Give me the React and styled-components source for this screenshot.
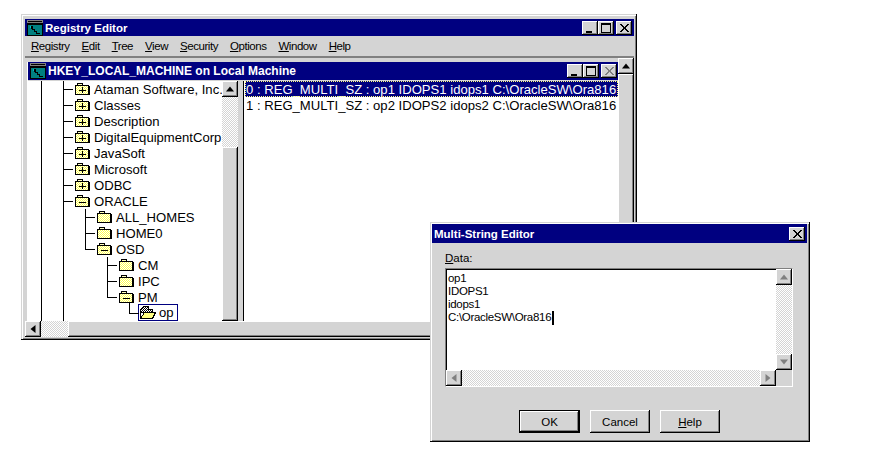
import React from "react";
import styled, { createGlobalStyle, css } from "styled-components";

const FACE = "#d4d4d4";
const SHADOW = "#808080";
const NAVY = "#000080";
const FONT = `"Liberation Sans", Arial, sans-serif`;

const GlobalStyle = createGlobalStyle`
  html, body {
    margin: 0;
    padding: 0;
    background: #fff;
  }
  #root {
    height: 465px;
  }
`;

const raised = css`
  background-color: ${FACE};
  box-shadow: inset -1px -1px 0 #000, inset 1px 1px 0 #fff, inset -2px -2px 0 ${SHADOW};
`;

const checker = css`
  background: repeating-conic-gradient(#fff 0 25%, ${FACE} 0 50%) 0 0 / 2px 2px;
`;

const Desktop = styled.div`
  position: relative;
  width: 875px;
  height: 465px;
  overflow: hidden;
  background: #fff;
  font-family: ${FONT};
  color: #000;
`;

const Window = styled.div`
  position: absolute;
  left: ${(p) => p.$left}px;
  top: ${(p) => p.$top}px;
  width: ${(p) => p.$width}px;
  height: ${(p) => p.$height}px;
  box-sizing: border-box;
  display: flex;
  flex-direction: column;
  padding: ${(p) => p.$padding};
  background: ${FACE};
  box-shadow: inset -1px -1px 0 #000, inset 1px 1px 0 ${FACE}, inset 2px 2px 0 #fff, inset -2px -2px 0 ${SHADOW};
`;

const TitleBar = styled.div`
  flex: none;
  height: ${(p) => p.$height}px;
  display: flex;
  align-items: center;
  padding: 0 ${(p) => p.$right || 2}px 0 ${(p) => p.$left || 2}px;
  background: ${NAVY};
  color: #fff;
`;

const TitleText = styled.span`
  flex: 1;
  margin-left: ${(p) => p.$indent || 0}px;
  font-size: ${(p) => p.$size || 12}px;
  font-weight: 700;
  white-space: nowrap;
`;

const CaptionButton = styled.div`
  ${raised}
  flex: none;
  width: 16px;
  height: 14px;
  display: flex;
  align-items: center;
  justify-content: center;
  margin-left: ${(p) => p.$gap || 0}px;
`;

const CaptionGlyph = styled.svg`
  display: block;
  width: 10px;
  height: 10px;
  color: ${(p) => (p.$disabled ? SHADOW : "#000")};
`;

const MenuBar = styled.div`
  flex: none;
  height: 20px;
  display: flex;
  align-items: center;
  gap: 12px;
  padding-left: 6px;
  font-size: 11.5px;
  letter-spacing: -0.45px;
`;

const MenuItem = styled.span`
  white-space: nowrap;
`;

const Workspace = styled.div`
  flex: 1;
  min-height: 0;
  display: flex;
  border-top: 2px solid ${SHADOW};
`;

const MdiArea = styled.div`
  flex: 1;
  min-width: 0;
  padding: 4px 0 0 2px;
  overflow: hidden;
`;

const ChildWindow = styled.div`
  height: 100%;
  display: flex;
  flex-direction: column;
  border-left: 1px solid #fff;
`;

const SplitPane = styled.div`
  flex: 1;
  min-height: 0;
  display: flex;
  padding-top: 1px;
`;

const TreePane = styled.div`
  flex: none;
  width: 194px;
  padding-left: 13px;
  box-sizing: border-box;
  background: #fff;
  overflow: hidden;
`;

const TreeRow = styled.div`
  height: 16px;
  display: flex;
  align-items: stretch;
  font-size: 13.1px;
  white-space: nowrap;
`;

const Guide = styled.span`
  flex: none;
  position: relative;
  width: ${(p) => (p.$kind === "tee" || p.$kind === "ell" ? 11 : 22)}px;

  &::before {
    content: "";
    display: ${(p) => (p.$kind === "none" ? "none" : "block")};
    position: absolute;
    left: 0;
    top: ${(p) => (p.$kind === "ell" ? "-3px" : "0")};
    bottom: ${(p) => (p.$kind === "ell" ? "7px" : "0")};
    width: 1px;
    background: #000;
  }

  &::after {
    content: "";
    display: ${(p) => (p.$kind === "tee" || p.$kind === "ell" ? "block" : "none")};
    position: absolute;
    left: 0;
    top: 8px;
    width: 10px;
    height: 1px;
    background: #000;
  }
`;

const FolderIcon = styled.svg`
  flex: none;
  display: block;
  width: 16px;
  height: 14px;
  margin-top: 1px;
`;

const TreeLabel = styled.span`
  margin-left: 4px;
  line-height: 17px;
`;

const SelectedNode = styled.span`
  display: flex;
  align-items: center;
  height: 17px;
  margin: -1px 0 0 -2px;
  padding: 0 3px 0 1px;
  border: 1px solid ${NAVY};
  box-sizing: border-box;
`;

const OpenLabel = styled.span`
  margin-left: 3px;
  line-height: 15px;
`;

const ScrollColumn = styled.div`
  flex: none;
  width: 16px;
  display: flex;
  flex-direction: column;
`;

const ScrollRow = styled.div`
  flex: none;
  height: 16px;
  display: flex;
`;

const ScrollButton = styled.div`
  ${raised}
  flex: none;
  width: 16px;
  height: 16px;
  display: flex;
  align-items: center;
  justify-content: center;
`;

const Arrow = styled.svg`
  display: block;
  width: 8px;
  height: 8px;
  color: ${(p) => (p.$disabled ? SHADOW : "#000")};
`;

const Thumb = styled.div`
  ${raised}
  flex: 1;
  min-width: 0;
  min-height: 0;
`;

const Track = styled.div`
  ${checker}
  flex: ${(p) => (p.$size ? "none" : 1)};
  ${(p) => (p.$size ? `${p.$axis === "x" ? "width" : "height"}: ${p.$size}px;` : "")}
`;

const Splitter = styled.div`
  flex: none;
  width: 5px;
  background: ${FACE};
`;

const ValueList = styled.div`
  flex: 1;
  min-width: 0;
  padding-left: 1px;
  border-left: 1px solid #000;
  background: #fff;
  overflow: hidden;
`;

const ValueRow = styled.div`
  height: 16px;
  box-sizing: border-box;
  padding-left: 1px;
  line-height: 17px;
  font-size: 13.1px;
  white-space: nowrap;
  ${(p) =>
    p.$selected &&
    css`
      background: ${NAVY};
      color: #fff;
      outline: 1px dotted #ffff80;
      outline-offset: -1px;
    `}
`;

const DialogBody = styled.div`
  flex: 1;
  display: flex;
  flex-direction: column;
  padding: 9px 0 0 13px;
`;

const FieldLabel = styled.div`
  height: 16px;
  line-height: 13px;
  font-size: 11.5px;
`;

const EditBox = styled.div`
  flex: none;
  width: 348px;
  height: 119px;
  box-sizing: border-box;
  display: grid;
  grid-template-columns: 1fr 16px;
  grid-template-rows: 1fr 16px;
  border: 1px solid;
  border-color: ${SHADOW} #fff #fff ${SHADOW};
  box-shadow: inset 1px 1px 0 #000;
`;

const EditText = styled.div`
  padding: 1.5px 0 0 1px;
  margin: 1px 0 0 1px;
  background: #fff;
  font-size: 11.5px;
  line-height: 13.2px;
  letter-spacing: -0.3px;
`;

const EditLine = styled.div`
  height: 13.2px;
  white-space: nowrap;
`;

const Caret = styled.span`
  display: inline-block;
  width: 2px;
  height: 14px;
  margin-left: 1px;
  background: #000;
  vertical-align: top;
`;

const Corner = styled.div`
  background: ${FACE};
`;

const ButtonRow = styled.div`
  flex: none;
  display: flex;
  gap: 10px;
  margin: 23px 0 0 74px;
`;

const PushButton = styled.div`
  ${raised}
  flex: none;
  width: ${(p) => (p.$default ? 61 : 60)}px;
  height: 23px;
  box-sizing: border-box;
  display: flex;
  align-items: center;
  justify-content: center;
  font-size: 11.5px;
  ${(p) =>
    p.$default &&
    css`
      border: 1px solid #000;
    `}
`;

function AppIcon() {
  return (
    <svg width="16" height="16" viewBox="0 0 16 16" shapeRendering="crispEdges" style={{ display: "block", flex: "none" }}>
      <rect x="0" y="0" width="16" height="3" fill="#808080" />
      <rect x="1" y="1" width="14" height="1" fill="#000" />
      <rect x="0" y="3" width="16" height="13" fill="#000" />
      <rect x="1" y="5" width="14" height="10" fill="#008080" />
      <path d="M4 6h2v3h2v2h2v2h3v1h-4v-2h-2v-2h-2v-1h-1z" fill="#000" />
      <rect x="3" y="6" width="1" height="2" fill="#00c0c0" />
    </svg>
  );
}

function Folder({ mark }) {
  return (
    <FolderIcon viewBox="0 0 16 14" shapeRendering="crispEdges">
      <defs>
        <pattern id="dither" width="2" height="2" patternUnits="userSpaceOnUse">
          <rect width="2" height="2" fill="#fff" />
          <rect width="1" height="1" fill="#ffff50" />
          <rect x="1" y="1" width="1" height="1" fill="#ffff50" />
        </pattern>
      </defs>
      <path d="M3.5 3.5V1.5h5v2" fill="#ffffc0" stroke="#000" />
      <rect x="1.5" y="3.5" width="13" height="9" fill="url(#dither)" stroke="#000" />
      <rect x="15" y="4" width="1" height="9" fill="#000" />
      {mark && <rect x="5" y="7.5" width="7" height="1" fill="#000" />}
      {mark === "plus" && <rect x="8" y="5" width="1" height="6" fill="#000" />}
    </FolderIcon>
  );
}

function OpenFolder() {
  return (
    <FolderIcon viewBox="0 0 16 14" shapeRendering="crispEdges">
      <pattern id="hatch" width="2" height="2" patternUnits="userSpaceOnUse">
        <rect width="2" height="2" fill="#fff" />
        <rect width="1" height="1" fill="#000" />
        <rect x="1" y="1" width="1" height="1" fill="#000" />
      </pattern>
      <path d="M0.5 12.5V3.5L3.5 0.5H8.5V3.5H12.5V6.5H0.5z" fill="url(#hatch)" stroke="#000" />
      <path d="M0.5 12.5L4.5 6.5H15.5L12.5 12.5z" fill="#ffff80" stroke="#000" />
    </FolderIcon>
  );
}

const GLYPHS = {
  min: <rect x="1" y="8" width="6" height="2" fill="currentColor" />,
  max: <path d="M0.5 0.5H9.5V9.5H0.5zM0 1.5H10" fill="none" stroke="currentColor" />,
  close: <path d="M1 1L9 9M2 1L10 9M9 1L1 9M10 1L2 9" fill="none" stroke="currentColor" />,
};

function Caption({ type, disabled, gap }) {
  return (
    <CaptionButton $gap={gap}>
      <CaptionGlyph viewBox="0 0 10 10" $disabled={disabled} shapeRendering="crispEdges">
        {GLYPHS[type]}
      </CaptionGlyph>
    </CaptionButton>
  );
}

const ARROWS = {
  up: "M4 1.5L8 6.5H0z",
  down: "M4 6.5L0 1.5H8z",
  left: "M1.5 4L6.5 0V8z",
  right: "M6.5 4L1.5 0V8z",
};

function ArrowButton({ dir, disabled }) {
  return (
    <ScrollButton>
      <Arrow viewBox="0 0 8 8" $disabled={disabled}>
        <path d={ARROWS[dir]} fill="currentColor" />
      </Arrow>
    </ScrollButton>
  );
}

const TREE = [
  { label: "Ataman Software, Inc.", guides: ["pipe", "tee"], mark: "plus" },
  { label: "Classes", guides: ["pipe", "tee"], mark: "plus" },
  { label: "Description", guides: ["pipe", "tee"], mark: "plus" },
  { label: "DigitalEquipmentCorp", guides: ["pipe", "tee"], mark: "plus" },
  { label: "JavaSoft", guides: ["pipe", "tee"], mark: "plus" },
  { label: "Microsoft", guides: ["pipe", "tee"], mark: "plus" },
  { label: "ODBC", guides: ["pipe", "tee"], mark: "plus" },
  { label: "ORACLE", guides: ["pipe", "tee"], mark: "minus" },
  { label: "ALL_HOMES", guides: ["pipe", "pipe", "tee"] },
  { label: "HOME0", guides: ["pipe", "pipe", "tee"] },
  { label: "OSD", guides: ["pipe", "pipe", "ell"], mark: "minus" },
  { label: "CM", guides: ["pipe", "pipe", "none", "tee"] },
  { label: "IPC", guides: ["pipe", "pipe", "none", "tee"] },
  { label: "PM", guides: ["pipe", "pipe", "none", "ell"], mark: "minus" },
];

const VALUES = [
  "0 : REG_MULTI_SZ : op1 IDOPS1 idops1 C:\\OracleSW\\Ora816",
  "1 : REG_MULTI_SZ : op2 IDOPS2 idops2 C:\\OracleSW\\Ora816",
];

export default function App() {
  return (
    <Desktop>
      <GlobalStyle />
      <Window $left={21} $top={14} $width={616} $height={326} $padding="5px 3px 3px 4px">
        <TitleBar $height={17}>
          <AppIcon />
          <TitleText $size={11.5} $indent={2}>Registry Editor</TitleText>
          <Caption type="min" />
          <Caption type="max" />
          <Caption type="close" gap={2} />
        </TitleBar>
        <MenuBar>
          <MenuItem><u>R</u>egistry</MenuItem>
          <MenuItem><u>E</u>dit</MenuItem>
          <MenuItem><u>T</u>ree</MenuItem>
          <MenuItem><u>V</u>iew</MenuItem>
          <MenuItem><u>S</u>ecurity</MenuItem>
          <MenuItem><u>O</u>ptions</MenuItem>
          <MenuItem><u>W</u>indow</MenuItem>
          <MenuItem><u>H</u>elp</MenuItem>
        </MenuBar>
        <Workspace>
          <MdiArea>
            <ChildWindow>
              <TitleBar $height={18} $right={1}>
                <AppIcon />
                <TitleText $indent={2}>HKEY_LOCAL_MACHINE on Local Machine</TitleText>
                <Caption type="min" />
                <Caption type="max" />
                <Caption type="close" disabled gap={2} />
              </TitleBar>
              <SplitPane>
                <TreePane>
                  {TREE.map((node) => (
                    <TreeRow key={node.label}>
                      {node.guides.map((kind, i) => (
                        <Guide key={i} $kind={kind} />
                      ))}
                      <Folder mark={node.mark} />
                      <TreeLabel>{node.label}</TreeLabel>
                    </TreeRow>
                  ))}
                  <TreeRow>
                    <Guide $kind="pipe" />
                    <Guide $kind="pipe" />
                    <Guide $kind="none" />
                    <Guide $kind="none" />
                    <Guide $kind="ell" />
                    <SelectedNode>
                      <OpenFolder />
                      <OpenLabel>op</OpenLabel>
                    </SelectedNode>
                  </TreeRow>
                </TreePane>
                <ScrollColumn>
                  <ArrowButton dir="up" />
                  <Track $size={50} />
                  <Thumb />
                </ScrollColumn>
                <Splitter />
                <ValueList>
                  {VALUES.map((value, i) => (
                    <ValueRow key={value} $selected={i === 0}>
                      {value}
                    </ValueRow>
                  ))}
                </ValueList>
              </SplitPane>
            </ChildWindow>
          </MdiArea>
          <ScrollColumn>
            <ArrowButton dir="up" />
            <Thumb />
            <ArrowButton dir="down" />
          </ScrollColumn>
        </Workspace>
        <ScrollRow>
          <ArrowButton dir="left" />
          <Track $axis="x" $size={27} />
          <Thumb />
          <ArrowButton dir="right" />
        </ScrollRow>
      </Window>

      <Window $left={430} $top={222} $width={380} $height={220} $padding="2px 3px 2px 2px">
        <TitleBar $height={19} $left={2} $right={2}>
          <TitleText $size={11.5}>Multi-String Editor</TitleText>
          <Caption type="close" />
        </TitleBar>
        <DialogBody>
          <FieldLabel><u>D</u>ata:</FieldLabel>
          <EditBox>
            <EditText>
              <EditLine>op1</EditLine>
              <EditLine>IDOPS1</EditLine>
              <EditLine>idops1</EditLine>
              <EditLine>C:\OracleSW\Ora816<Caret /></EditLine>
            </EditText>
            <ScrollColumn>
              <ArrowButton dir="up" disabled />
              <Track />
              <ArrowButton dir="down" disabled />
            </ScrollColumn>
            <ScrollRow>
              <ArrowButton dir="left" disabled />
              <Track $axis="x" />
              <ArrowButton dir="right" disabled />
            </ScrollRow>
            <Corner />
          </EditBox>
          <ButtonRow>
            <PushButton $default>OK</PushButton>
            <PushButton>Cancel</PushButton>
            <PushButton><u>H</u>elp</PushButton>
          </ButtonRow>
        </DialogBody>
      </Window>
    </Desktop>
  );
}
